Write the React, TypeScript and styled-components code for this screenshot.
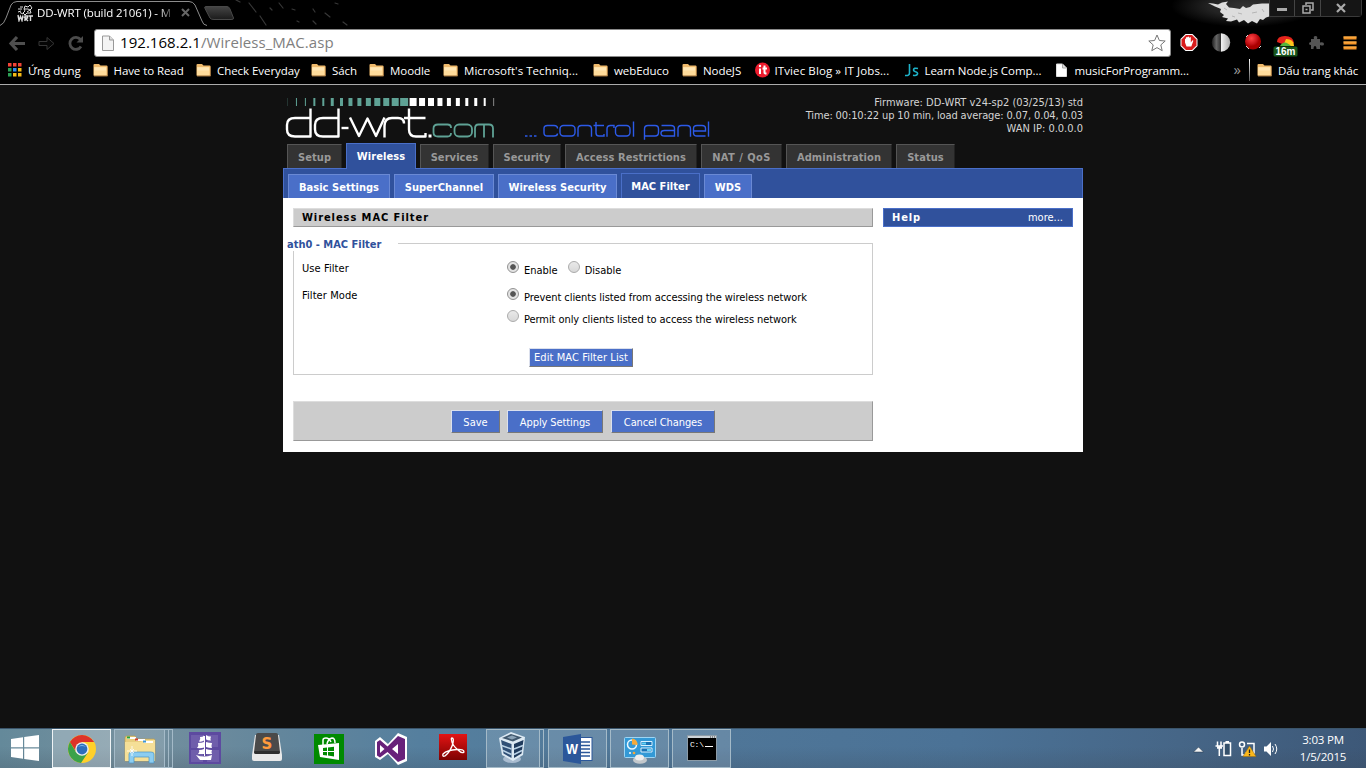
import React from 'react';
import styled, { createGlobalStyle, css } from 'styled-components';

const GlobalStyle = createGlobalStyle`
  * { box-sizing: border-box; }
  body { margin: 0; background: #111; overflow: hidden; }
`;

const uiFont = '"Open Sans", "Noto Sans", sans-serif';
const pageFont = '"DejaVu Sans Condensed", "DejaVu Sans", sans-serif';

const Screen = styled.div`
  width: 1366px;
  height: 768px;
  display: flex;
  flex-direction: column;
  background: #111;
  font-family: ${uiFont};
`;

/* ---------- browser frame ---------- */

const TabStrip = styled.div`
  height: 28px;
  display: flex;
  justify-content: space-between;
  background: #000;
  position: relative;
`;

const StripArt = styled.svg`
  position: absolute;
  left: 0;
  top: 0;
`;

const BrowserTab = styled.div`
  width: 210px;
  height: 28px;
  padding: 0 20px 3px 17px;
  display: flex;
  align-items: center;
  position: relative;
`;

const TabTitle = styled.span`
  width: 140px;
  margin-left: 4px;
  white-space: nowrap;
  color: #fff;
  font-size: 11.5px;
  letter-spacing: -0.13px;
  mask-image: linear-gradient(90deg, #000 122px, transparent 138px);
`;

const TabClose = styled.svg`
  margin-left: 4px;
`;

const WindowControls = styled.div`
  position: relative;
  display: flex;
  height: 17px;
  width: 93px;
  margin-right: 4px;
  border: 1px solid #3a3a3a;
  border-top: 0;
  border-radius: 0 0 4px 0;
`;

const ControlButton = styled.div<{ $w: number }>`
  width: ${p => p.$w}px;
  display: flex;
  align-items: center;
  justify-content: center;
  background: #151515;
  & + & { border-left: 1px solid #444; }
`;

const Toolbar = styled.div`
  height: 29px;
  display: flex;
  align-items: center;
  background: #000;
  padding-left: 8px;
`;

const NavIcons = styled.svg`
  flex: none;
  margin-right: 8px;
`;

const AddressBar = styled.div`
  width: 1077px;
  height: 28px;
  display: flex;
  align-items: center;
  padding: 0 4px 0 5px;
  background: #fff;
  border: 1px solid #8a8a8a;
  border-radius: 3px;
`;

const Url = styled.span`
  flex: 1;
  margin-left: 4px;
  color: #808080;
  font-size: 15px;
  letter-spacing: 0.05px;
  line-height: 24px;
  padding-bottom: 2px;
`;

const Host = styled.span`
  color: #000;
`;

const Extensions = styled.svg`
  margin-left: 4px;
`;

const BookmarkBar = styled.div`
  height: 28px;
  display: flex;
  align-items: flex-start;
  padding-left: 7px;
  background: #000;
  border-bottom: 1px solid #aaa;
`;

const Bookmark = styled.div<{ $w: number; $ls?: number }>`
  width: ${p => p.$w}px;
  height: 26px;
  flex: none;
  display: flex;
  align-items: center;
  gap: 5px;
  color: #fff;
  font-size: 11.5px;
  letter-spacing: ${p => p.$ls ?? -0.05}px;
  white-space: nowrap;
`;

const Overflow = styled.span`
  width: 16px;
  line-height: 24px;
  color: #999;
  font-size: 15px;
`;

const BarDivider = styled.span`
  width: 1px;
  height: 22px;
  margin: 2px 7px 0 0;
  background: linear-gradient(#fff, #555);
`;

/* ---------- router page ---------- */

const Viewport = styled.main`
  flex: 1;
  font-family: ${pageFont};
  font-size: 11px;
  background: #111;
`;

const Panel = styled.div`
  width: 800px;
  margin-left: 283px;
`;

const Masthead = styled.header`
  height: 58px;
  display: flex;
  justify-content: space-between;
`;

const Status = styled.div`
  padding-top: 11px;
  line-height: 13px;
  text-align: right;
  color: #d4d4d4;
`;

const StatusLine = styled.div<{ $ls?: number }>`
  letter-spacing: ${p => p.$ls ?? 0}px;
`;

const MainTabs = styled.nav`
  height: 25px;
  display: flex;
  align-items: flex-end;
  gap: 4px;
  padding-left: 4px;
`;

const MainTab = styled.a<{ $w: number; $active?: boolean }>`
  width: ${p => p.$w}px;
  height: 24px;
  line-height: 25px;
  text-align: center;
  font-weight: bold;
  letter-spacing: ${p => (p.$w === 81 ? 0.45 : 0.08)}px;
  white-space: nowrap;
  color: #999;
  background: #333;
  border: solid;
  border-width: 1px 1px 0;
  border-color: #555 #222 #555 #555;
  ${p => p.$active && css`
    height: 26px;
    line-height: 25px;
    margin-bottom: -1px;
    position: relative;
    color: #fff;
    background: #30519c;
    border-color: #4a6fc8;
  `}
`;

const SubMenu = styled.nav`
  height: 30px;
  display: flex;
  align-items: flex-end;
  gap: 4px;
  padding-left: 4px;
  background: #30519c;
  border: solid #4a6fc8;
  border-width: 1px 1px 0;
`;

const SubTab = styled.a<{ $w: number; $active?: boolean }>`
  width: ${p => p.$w}px;
  height: ${p => (p.$active ? 25 : 24)}px;
  line-height: 25px;
  text-align: center;
  font-weight: bold;
  letter-spacing: 0.04px;
  white-space: nowrap;
  color: #fff;
  background: ${p => (p.$active ? '#30519c' : '#4a6fc8')};
  border: solid ${p => (p.$active ? '#4a6fc8' : '#6a89d4')};
  border-width: 1px 1px 0;
`;

const Content = styled.div`
  height: 254px;
  display: flex;
  gap: 10px;
  padding: 10px;
  background: #fff;
`;

const Main = styled.section`
  width: 580px;
`;

const Title = styled.h2`
  height: 19px;
  margin: 0;
  padding-left: 8px;
  font-size: 11px;
  line-height: 18px;
  letter-spacing: 0.93px;
  color: #000;
  background: #ccc;
  border: 1px solid;
  border-color: #ddd #999 #999 #ddd;
`;

const Fieldset = styled.div`
  height: 132px;
  margin-top: 16px;
  padding-left: 8px;
  border: 1px solid #ccc;
`;

const Legend = styled.div`
  width: 111px;
  height: 14px;
  margin: -7px 0 7px -15px;
  line-height: 15px;
  font-weight: bold;
  color: #30519c;
  background: #fff;
`;

const Setting = styled.div<{ $h: number }>`
  height: ${p => p.$h}px;
  display: flex;
`;

const SettingLabel = styled.div`
  width: 205px;
  padding-top: 4px;
  line-height: 14px;
  letter-spacing: 0.08px;
`;

const Choices = styled.div`
  display: flex;
  flex-wrap: wrap;
  align-content: flex-start;
  column-gap: 10px;
  row-gap: 6px;
  flex: 1;
  padding-top: 3px;
`;

const Choice = styled.label<{ $full?: boolean; $ls?: number }>`
  height: 16px;
  display: flex;
  gap: 5px;
  width: ${p => (p.$full ? '100%' : 'auto')};
  letter-spacing: ${p => p.$ls ?? 0}px;
  line-height: 20px;
  white-space: nowrap;
`;

const RadioDot = styled.span<{ $on?: boolean }>`
  width: 12px;
  height: 12px;
  border: 1px solid ${p => (p.$on ? '#929292' : '#ababab')};
  border-radius: 50%;
  background: ${p => (p.$on ? 'radial-gradient(circle, #555 0 2.4px, #e3e3e3 3.2px)' : 'linear-gradient(#e9e9e9, #d8d8d8)')};
`;

const Button = styled.button<{ $w: number; $h: number; $ls?: number }>`
  width: ${p => p.$w}px;
  height: ${p => p.$h}px;
  padding: ${p => (p.$h > 20 ? 1 : 0)}px 0 0;
  font: 11px ${pageFont};
  letter-spacing: ${p => p.$ls ?? 0}px;
  white-space: nowrap;
  color: #fff;
  background: #4a6fc8;
  border: 1px solid;
  border-color: #dbe0ed #777 #777 #dbe0ed;
`;

const EditRow = styled.div`
  padding: 17px 0 0 227px;
`;

const Footer = styled.div`
  height: 40px;
  margin-top: 26px;
  padding: 8px 0 0 157px;
  display: flex;
  gap: 7px;
  background: #ccc;
  border: 1px solid;
  border-color: #ddd #999 #999 #ddd;
  ${Button}:last-child { margin-left: 1px; }
`;

const Help = styled.aside`
  width: 190px;
  height: 19px;
  display: flex;
  justify-content: space-between;
  padding: 0 9px 0 8px;
  line-height: 18px;
  color: #fff;
  background: #30519c;
  border: 1px solid #4a6fc8;
`;

const HelpTitle = styled.b`
  letter-spacing: 0.9px;
`;

/* ---------- taskbar ---------- */

const Taskbar = styled.footer`
  height: 40px;
  display: flex;
  background:
    linear-gradient(#0000 45%, #39435038),
    linear-gradient(90deg, #64899a 0, #75909e 130px, #63869c 280px, #557f9e 420px, #4f7698 720px, #4b7296 960px, #466687 1180px, #3d5878 1366px);
  border-top: 1px solid #3b556b;
`;

const TaskSlot = styled.div<{ $w: number; $ml?: number; $open?: boolean; $focus?: boolean; $lift?: number }>`
  width: ${p => p.$w}px;
  height: 39px;
  margin-left: ${p => p.$ml ?? 0}px;
  padding-bottom: ${p => p.$lift ?? 0}px;
  flex: none;
  display: flex;
  align-items: center;
  justify-content: center;
  ${p => p.$open && css`
    background: #ffffff22;
    border: 1px solid #a4bac8;
  `}
  ${p => p.$focus && css`
    background: #ffffff40;
    border: 1px solid #eef3f5;
  `}
`;

const StackEdge = styled.div`
  width: 4px;
  height: 39px;
  border: solid #a4bac8;
  border-width: 1px 1px 1px 0;
`;

const Tray = styled.div`
  flex: 1;
  display: flex;
  align-items: center;
  justify-content: flex-end;
`;

const Clock = styled.div`
  width: 86px;
  text-align: center;
  color: #fff;
  font-size: 11.5px;
  line-height: 17px;
  letter-spacing: -0.2px;
  padding-bottom: 1px;
`;

/* ---------- drawings ---------- */

const specks = [[249, 3, 256, 12], [260, 16, 266, 25], [279, 3, 283, 8], [292, 9, 295, 10], [313, 9, 315, 12], [325, 13, 330, 17], [313, 21, 316, 24], [343, 22, 347, 25], [270, 8, 272, 10], [335, 3, 338, 4], [236, 0, 240, 2], [297, 21, 299, 22]];

const FrameArt = () => (
  <StripArt width="1366" height="28">
    <g stroke="#555" strokeWidth="1.2" strokeLinecap="round" opacity=".65">
      {specks.map(([a, b, c, d]) => <line key={a + b} x1={a} y1={b} x2={c} y2={d} />)}
    </g>
    <defs>
      <radialGradient id="haze"><stop offset="0" stopColor="#333" /><stop offset=".5" stopColor="#222" /><stop offset="1" stopColor="#000" /></radialGradient>
      <linearGradient id="newTab" x2="0" y2="1"><stop stopColor="#454545" /><stop offset="1" stopColor="#1b1b1b" /></linearGradient>
    </defs>
    <ellipse cx="1245" cy="6" rx="74" ry="21" fill="url(#haze)" />
    <path d="M1208 3L1213 3.500 1218 4.500 1222 2.500 1228 1.500 1226 4 1229 7.500 1234 8 1240 9 1243 6 1246 8 1250 7 1253 4.500 1262 3.500 1271 3.500V16L1266 17.500 1263 20 1260 19 1257 23.500 1252 21 1248 23.500 1244 20 1239 22.500 1237 19.500 1231 21.500 1226 21 1228 18.500 1222 17 1224 15 1220 12 1221 9 1215 6.500Z" fill="#ddd" />
    <path d="M1224 8l3 2M1238 13l4 1M1252 13l5-1M1232 16l3 1M1262 9l2 3" stroke="#b5b5b5" fill="none" />
    <path d="M1271 4l5 4 4-5M1272 9l3-1" stroke="#fff" fill="none" />
    <path d="M0 25.5Q4 24 6 18L11 5Q13 1.5 17 1.5H189Q193 1.5 195 5L202 21Q203 25 207 25.5" fill="#000" stroke="#8c8c8c" />
    <path d="M206 6.5H227Q229 6.5 230 9L233.500 18Q234 19.500 231 19.500H214Q211 19.500 210 18L205 8.500Q204 6.500 206 6.500Z" fill="url(#newTab)" stroke="#484848" />
  </StripArt>
);

const Favicon = () => (
  <svg width="16" height="18" viewBox="0 0 16 18">
    <g fill="none" stroke="#ddd" strokeWidth="1">
      <path d="M7 5l1-3 3 1 2-2 2 3-2 2 1 3-4 0-2 2-2-2 2-2-1-2h4l2 1-3 2" />
      <path d="M3 3h3M1 5h4M4 7L1 8M6 10L3 8.500" />
      <path d="M1 11l1 5.500 1.500-4 1.500 4 1-5M8 17v-5h2.500v2H8l3 3M11.500 12H16M13.500 12v5" strokeWidth="1.400" />
    </g>
  </svg>
);

const Folder = () => (
  <svg width="16" height="14" viewBox="0 0 16 14">
    <path d="M.5 2Q.5 1 1.500 1H6L7.500 2.500H13.500Q14.500 2.500 14.500 3.500V12Q14.500 13 13.500 13H1.500Q.5 13 .5 12Z" fill="#efba6c" />
    <path d="M1 4H13.500V12.500H1Z" fill="#ffdc9b" />
    <path d="M1.500 4.500h11.500v3H1.500z" fill="#ffe7b5" />
    <path d="M14.500 3.500v9.500H1" fill="none" stroke="#9c7340" />
  </svg>
);

const AppsGrid = () => (
  <svg width="16" height="16">
    {['#f44336', '#f44336', '#ef4436', '#2ca255', '#2d8cf0', '#f5b915', '#2ca255', '#f5b915', '#f5b915'].map((c, i) => (
      <rect key={i} x={1 + (i % 3) * 5} y={1 + Math.floor(i / 3) * 5} width="3.500" height="3.500" fill={c} />
    ))}
  </svg>
);

const PageIcon = ({ light }: { light?: boolean }) => (
  <svg width="16" height="18" viewBox="0 0 16 18">
    <path d={light ? 'M2.5 3H8.500L12.500 7V15.500H2.500Z' : 'M2.5 2H9.5L13.5 6V16.5H2.5Z'} fill={light ? '#fff' : '#f4f4f4'} stroke={light ? '#ddd' : '#999'} />
    <path d={light ? 'M8.5 3V7H12.5' : 'M9.5 2V6H13.5'} fill="#ddd" stroke={light ? '#aaa' : '#999'} />
  </svg>
);

const ItLogo = () => (
  <svg width="15" height="16">
    <circle cx="7.5" cy="8" r="7.5" fill="#ed1c2e" />
    <path d="M5 6.5V12M9.500 3.5V10.5Q9.5 11.5 11.5 11.5M7.5 6.5H12" stroke="#fff" strokeWidth="2" fill="none" />
    <circle cx="5" cy="4" r="1.2" fill="#fff" />
  </svg>
);

const JsLogo = () => (
  <svg width="16" height="16" fill="none" stroke="#1eb3c9" strokeWidth="1.6">
    <path d="M5.5 2V11Q5.5 14 1 13.5M14 6.500Q9.5 5.5 9.5 8 9.5 9 11.5 9.800 14 10.500 13.500 12 13 14 9 13.200" />
  </svg>
);

const ToolbarNav = () => (
  <NavIcons width="78" height="28">
    <path d="M9 8L3 14.5 9 21M4 14.5H17" fill="none" stroke="#4f4f4f" strokeWidth="3.2" />
    <path d="M31 12.5H39V8.5L46 14.5 39 20.5V16.5H31Z" fill="#050505" stroke="#363636" />
    <path d="M72.5 10.5A6 6 0 1 0 73 17.5" fill="none" stroke="#4c4c4c" strokeWidth="2.8" />
    <path d="M75 7V13.5H68.5Z" fill="#4c4c4c" />
  </NavIcons>
);

const ExtensionIcons = () => (
  <Extensions width="190" height="29">
    <defs>
      <linearGradient id="half" x2="1"><stop stopColor="#1c1c1c" /><stop offset=".25" stopColor="#666" /><stop offset=".48" stopColor="#333" /><stop offset=".5" stopColor="#f4f4f4" /><stop offset="1" stopColor="#aaa" /></linearGradient>
      <radialGradient id="redBall" cx=".4" cy=".3"><stop stopColor="#f44" /><stop offset=".7" stopColor="#c8151b" /><stop offset="1" stopColor="#a00" /></radialGradient>
    </defs>
    <path d="M10.5 6H17.500L22.5 11V18L17.500 23H10.5L5.5 18V11Z" fill="#fff" />
    <path d="M11 7H17L21.5 11.500V17.500L17 22H11L6.500 17.500V11.500Z" fill="#d81c1c" />
    <path d="M10 14.500V11q1-1 1 0V9.500q1-1 1.500 0V9q1-1 1.500 0v1l.5-.5q1-1 1.300 0v5l1.500-2q1-.5 1 .5l-2 5.500h-4.800Z" fill="#fff" />
    <circle cx="46" cy="14.500" r="9.200" fill="url(#half)" />
    <circle cx="78" cy="13.500" r="8" fill="url(#redBall)" />
    <path d="M71 9l2-2M84 20l2-2M71 18l3 3" stroke="#ddd" />
    <path d="M102 14Q102 8 110 8T119 15L110 17Z" fill="#e5241c" />
    <path d="M108 18L111 11Q119 11 119 18Z" fill="#ffc51c" />
    <path d="M105 18Q109 11 116 18Z" fill="#54b63c" />
    <rect x="98.500" y="18.500" width="24" height="10" rx="1.5" fill="#17561b" />
    <text x="110.500" y="27" textAnchor="middle" fontFamily="Liberation Sans" fontSize="10" fontWeight="bold" fill="#fff">16m</text>
    <path d="M136 11h3q-1-3 1.500-3t1.500 3h3v3.500q4-1 4 1.500t-4 1V21h-3.500q0-3-1.500-3t-1.500 3H136v-4q-2 0-2-1.500t2-1.500Z" fill="#555" />
    <path d="M168.500 10H181.500M168.500 15H181.500M168.500 20H181.500" stroke="#f4962a" strokeWidth="3.2" />
    <path d="M168.500 9H181.500M168.500 14H181.500M168.500 19H181.500" stroke="#ffb44f" />
  </Extensions>
);

const barWidths = [.5, 1, 1, 2, 2, 3, 3, 4, 4, 5, 6, 6, 7, 8, 7, 6, 6, 5, 4, 4, 3, 3, 2, 1];

const Logo = () => (
  <svg width="440" height="58">
    {barWidths.map((w, i) => (
      <rect key={i} x={4.5 + i * 8.95 - w / 2 + (i > 5 ? .3 : 0)} y="13" width={w} height="8" fill={i < 14 ? '#5fa295' : '#fff'} opacity={i === 0 || i === 23 ? .5 : 1} />
    ))}
    <g fill="none" strokeLinejoin="round">
      <g stroke="#fff" strokeWidth="2.4">
        <path d="M27.5 23.500V51.500H12Q4 51.500 4 44.500V40Q4 33 12 33H27.500" />
        <path d="M55.500 23.500V51.500H40Q32 51.500 32 44.500V40Q32 33 40 33H55.500" />
        <path d="M58.5 43H65.5" />
        <path d="M67 32.500L76 51 84.500 33.500 93 51 101.500 32.500" />
        <path d="M101.500 52.500V41Q101.500 33 109 33H115Q121 33 121 38.500" />
        <path d="M126 23.500V44.500Q126 51.500 133 51.500H142.500V48M121 33H142.500" />
      </g>
      <rect x="145.500" y="49.500" width="3" height="3" fill="#fff" />
      <g stroke="#5fa295" strokeWidth="1.8">
        <path d="M168 43V42.500Q168 39.500 164.500 39.500H155Q150.500 39.500 150.500 43.500V47.500Q150.500 51.500 155 51.500H164.500Q168 51.500 168 48" />
        <rect x="171.500" y="39.500" width="17.500" height="12" rx="4.500" />
        <path d="M192 52.500V43.500Q192 39.500 195.500 39.500H206Q210 39.500 210 43.500V52.500M201 39.500V52.500" />
      </g>
    </g>
    <g fill="none" stroke="#2c5ae8" strokeWidth="1.4">
      <path d="M242 51H244.500M246.500 51H249M251 51H253.500" />
      <path d="M274.5 43.500Q274.500 40.500 271 40.500H264.500Q261 40.500 261 43.500V48Q261 51 264.500 51H271Q274.500 51 274.500 48.500" />
      <rect x="277" y="40.500" width="15" height="10.500" rx="3.500" />
      <path d="M295 51.700V44Q295 40.500 298.500 40.500H305Q308.500 40.500 308.500 44V51.700" />
      <path d="M313 37V48Q313 51 316 51H321V49M310.500 40.500H321" />
      <path d="M324 51.700V44Q324 40.500 327.500 40.500H331V43" />
      <rect x="332.500" y="40.500" width="14.500" height="10.500" rx="3.500" />
      <path d="M350.5 36.500V51.700" />
      <path d="M361.500 54.700V44Q361.500 40.500 365 40.500H372Q375.500 40.500 375.500 44V47.500Q375.500 51 372 51H361.500" />
      <path d="M378.500 40.500H388Q391.500 40.500 391.500 43.500V51H381.500Q378 51 378 48.200 378 45.500 381.500 45.500H391.500" />
      <path d="M395 51.700V44Q395 40.500 398.500 40.500H404Q407.500 40.500 407.500 44V51.700" />
      <path d="M410.500 46H422.500V43.500Q422.500 40.500 419 40.500H414Q410.500 40.500 410.500 43.500V48Q410.500 51 414 51H422.500" />
      <path d="M425.500 36.500V51.700" />
    </g>
  </svg>
);

const StartIcon = () => (
  <svg width="28" height="26" fill="#fff">
    <path d="M0 4L12 2.2V12.2H0ZM13.200 2L28 0V12.2H13.2ZM0 13.4H12V23.8L0 22ZM13.200 13.4H28V26L13.2 24Z" />
  </svg>
);

const ChromeIcon = () => (
  <svg width="30" height="30" viewBox="-15 -15 30 30">
    <circle r="14" fill="#ffd02b" />
    <path d="M0-7H12.1A14 14 0 0 0-12.1-7L-5 4Z" fill="#dd3329" />
    <path d="M-12.1-7A14 14 0 0 0-1 14L6 3.5 0 0-6 3Z" fill="#3ba24a" />
    <circle r="6.8" fill="#eee" /><circle r="5.4" fill="#2d6ebd" />
    <path d="M-4-2Q0-6 4-2Q0-4-4-2Z" fill="#7dbcf0" />
  </svg>
);

const ExplorerIcon = () => (
  <svg width="34" height="30">
    <path d="M2 4Q2 2 4 2H12L14 5H31Q32 5 32 7V27H2Z" fill="#e9ce7e" stroke="#bd9a46" strokeWidth=".6" />
    <path d="M2 8H18L20 6H32V27H2Z" fill="#f5df97" />
    <path d="M4 3h9v2H4zM13 5h9v2h-9zM21 7h9v2h-9z" fill="#fff" />
    <path d="M4 2.500h3v2H4z" fill="#29a33a" /><path d="M12 4.500h3v2h-3z" fill="#d5402e" /><path d="M20 6.500h3v2h-3z" fill="#3c95d8" />
    <path d="M6 29V20Q6 18 9 18H28Q31 18 31 20V29H26V23H11V29Z" fill="#8ccdf1" stroke="#4894c4" strokeWidth=".7" />
    <path d="M9 12v10M4 17h10M7 15l4 4M11 15l-4 4" stroke="#fff" strokeWidth=".8" />
  </svg>
);

const ShipIcon = () => (
  <svg width="32" height="32">
    <rect width="32" height="32" fill="#5d4aa0" /><path d="M2 3h13v13H2zM18 3h11v12H18zM2 18h12v12H2zM18 18h12v12H18z" fill="#6f5eab" />
    <g fill="#fff"><path d="M11 5q3 0 4-1.500v5q-2 1.500-5 1 2-2 1-4.500zM17 3q3 2 5 1.500-1 2 0 4-3 0-5-1zM9 11q4 0 6-1v5.500q-3 1-7 .5 2-2 1-5zM17 10q3 1 6 1-1 3 0 5-3 0-6-1zM10 18q3 0 5-1v5h-6q2-2 1-4zM17 17q3 1 6 1-1 2 0 4h-6zM7 23q8 3 16 0l-1 5H11z" /><path d="M15.500 4v20" stroke="#fff" /></g>
  </svg>
);

const SublimeIcon = () => (
  <svg width="32" height="30">
    <path d="M1 22L4 2H28L31 22V26Q31 28 29 28H3Q1 28 1 26Z" fill="#e9e9e9" />
    <path d="M5 2Q5 0 7 0H25Q27 0 27 2L29 19Q29 21 27 21H5Q3 21 3 19Z" fill="#4a4a4a" />
    <path d="M4 18H28L29 19Q29 21 27 21H5Q3 21 3 19Z" fill="#2e2e2e" />
    <text x="16" y="15.500" textAnchor="middle" fill="#ff9a3c" fontFamily="DejaVu Sans" fontWeight="bold" fontSize="15">S</text>
  </svg>
);

const StoreIcon = () => (
  <svg width="30" height="30">
    <rect width="30" height="30" fill="#008a00" />
    <path d="M4 11L25 9V26L6 23Z" fill="#fff" /><path d="M9 11V6Q9 4 12 4T17 8M13 10Q14 5 18 4 21 4 21 9" fill="none" stroke="#fff" strokeWidth="1.5" />
    <path d="M9 14l4-.5V17H9zM14 13.400l6-.7V17h-6zM9 18h4v3.500L9 21zM14 18h6v4.400l-6-.8z" fill="#008a00" />
  </svg>
);

const VisualStudioIcon = () => (
  <svg width="34" height="32">
    <path d="M1 8L6 4 14 11 24 0 33 4V28L24 32 14 21 6 27 1 24Z" fill="#fff" />
    <path d="M3 9L6 7 13.5 13.5 24 3 31 6V26L24 29 13.5 19 6 24.5 3 22.5V9M6 12V20L10.5 16ZM24 11L18 16 24 21Z" fill="#68217a" fillRule="evenodd" />
  </svg>
);

const AcrobatIcon = () => (
  <svg width="28" height="26">
    <defs><linearGradient id="acro" x2="0" y2="1"><stop stopColor="#e31414" /><stop offset="1" stopColor="#7d0202" /></linearGradient></defs>
    <rect width="28" height="26" fill="url(#acro)" />
    <path d="M13 4Q15 4 14 9 12 17 6 22 3 23 4 20 8 16 18 15.5 25 15 25 18 23 20 19 16 13 11 12.5 6 12 4 13 4Z" fill="none" stroke="#fff" strokeWidth="1.3" />
  </svg>
);

const VirtualBoxIcon = () => (
  <svg width="32" height="32">
    <ellipse cx="15" cy="27" rx="9" ry="4" fill="#a9bcd0" />
    <path d="M2 6L14 0 28 5 26 23 16 29 5 23Z" fill="#dce9f3" />
    <path d="M5 6L14 2 25 5.500 16 9.500Z" fill="#40586e" /><path d="M10 5.500l5-2 5 2-5 2z" fill="#8ba3b7" />
    <path d="M4 8L14.500 12V26L6.500 21.500Z" fill="#2f4f76" /><path d="M26.500 8L17 12V26L24.500 21.500Z" fill="#1f3a5c" />
    <path d="M4.500 13.500L14.500 17M6 18.500l8.500 4M17 17l9-3.500M17 22.500l8-4" stroke="#b9d2e6" strokeWidth="1.6" />
  </svg>
);

const WordIcon = () => (
  <svg width="30" height="30">
    <rect x="14" y="3.5" width="15" height="23" fill="#fff" stroke="#2b579a" />
    <path d="M17 8H27M17 11.5H27M17 15H27M17 18.5H27M17 22H27" stroke="#2b579a" strokeWidth="1.4" />
    <path d="M0 3L18 0V30L0 27Z" fill="#2b579a" />
    <text x="9" y="20" textAnchor="middle" fill="#fff" fontFamily="Liberation Sans" fontWeight="bold" fontSize="14" textLength="12" lengthAdjust="spacingAndGlyphs">W</text>
  </svg>
);

const ControlPanelIcon = () => (
  <svg width="32" height="30">
    <rect x=".5" y="3.5" width="31" height="20" rx="1" fill="#3399d6" stroke="#9ed5f4" />
    <circle cx="8" cy="10.5" r="4.5" fill="none" stroke="#e9f7ff" strokeWidth="1.5" /><path d="M8 10.500V4.500A6 6 0 0 1 13.500 11Z" fill="#f5a93a" />
    <path d="M17 7.500h11v4H17zM17 14h11v4H17z" fill="#1973b5" stroke="#d8f1ff" /><path d="M18 9.500h4M23 16h4" stroke="#65d4f8" strokeWidth="2" />
    <circle cx="6" cy="19" r="1" fill="#fff" /><circle cx="10" cy="19" r="1.3" fill="#f5a93a" />
    <ellipse cx="16" cy="26" rx="7" ry="3.800" fill="#c3c8cc" /><ellipse cx="15.500" cy="23.500" rx="4.5" ry="3" fill="#eee" />
  </svg>
);

const TerminalIcon = () => (
  <svg width="30" height="26">
    <rect x=".5" y=".5" width="29" height="25" fill="#000" stroke="#8c9ba7" /><path d="M1 2H29" stroke="#ccd3d8" strokeWidth="2" /><path d="M23 2h1M25 2h1M27 2h1" stroke="#444" />
    <text x="3" y="12" fill="#fff" fontFamily="Liberation Mono" fontSize="8" textLength="14">C:\</text><path d="M18 11.500H26" stroke="#fff" />
  </svg>
);

const TrayIcons = () => (
  <svg width="96" height="24">
    <path d="M9.500 15L14.500 10 19.500 15Z" fill="#f4f4f4" stroke="#20364b" strokeWidth=".5" />
    <g fill="none" stroke="#fff" strokeWidth="1.5">
      <rect x="40" y="6" width="6.500" height="12.500" fill="#34506b" /><path d="M41.500 5H45" strokeWidth="2" /><path d="M33.500 4.500V9M37 4.500V9M31.500 9H39M35.300 9V19" /><path d="M33 10.500H38" strokeWidth="2.5" />
      <path d="M63 6.500H70V16H61M58 11V18H65" /><circle cx="58" cy="7.500" r="2.500" />
    </g>
    <path d="M65.500 9L72 19.500H59Z" fill="#fbb81b" stroke="#9c6b0a" strokeWidth=".5" /><path d="M65.500 12.500V16M65.500 17V18.500" stroke="#222" strokeWidth="1.3" />
    <path d="M80 9.500H82.500L87 5V19L82.500 14.500H80Z" fill="#fff" /><path d="M88.500 9Q90.500 12 88.500 15M91 7Q94.500 12 91 17" stroke="#fff" fill="none" />
  </svg>
);

/* ---------- data ---------- */

const folders: [string, number, number?][] = [
  ['Have to Read', 103.5, -0.08], ['Check Everyday', 115], ['Sách', 58], ['Moodle', 74],
  ["Microsoft's Techniq...", 150, 0.04], ['webEduco', 89], ['NodeJS', 72.5],
];

const mainTabs: [string, number][] = [
  ['Setup', 55], ['Wireless', 70], ['Services', 69], ['Security', 68], ['Access Restrictions', 132],
  ['NAT / QoS', 81], ['Administration', 106], ['Status', 59],
];

const subTabs: [string, number][] = [
  ['Basic Settings', 102], ['SuperChannel', 100], ['Wireless Security', 119], ['MAC Filter', 79], ['WDS', 48],
];

export default function App() {
  return (
    <Screen>
      <GlobalStyle />
      <TabStrip>
        <FrameArt />
        <BrowserTab>
          <Favicon />
          <TabTitle>DD-WRT (build 21061) - M</TabTitle>
          <TabClose width="9" height="9" stroke="#666" strokeWidth="2"><path d="M1 1L8 8M8 1L1 8" /></TabClose>
        </BrowserTab>
        <WindowControls>
          <ControlButton $w={24}><svg width="12" height="12"><rect x="1" y="6" width="10" height="3" fill="#aaa" /></svg></ControlButton>
          <ControlButton $w={26}>
            <svg width="12" height="12" fill="none" stroke="#aaa" strokeWidth="1.5"><path d="M4 3V1H11V8H9" /><rect x="1" y="4" width="7" height="7" /><path d="M3.500 7.500H5.500" /></svg>
          </ControlButton>
          <ControlButton $w={41}><svg width="10" height="10" stroke="#aaa" strokeWidth="2.2"><path d="M1 1L9 9M9 1L1 9" /></svg></ControlButton>
        </WindowControls>
      </TabStrip>

      <Toolbar>
        <ToolbarNav />
        <AddressBar>
          <PageIcon />
          <Url><Host>192.168.2.1</Host>/Wireless_MAC.asp</Url>
          <svg width="18" height="18" viewBox="0 0 18 18"><path d="M9 1L11.4 6.5 17.200 7 12.800 10.9 14.2 16.7 9 13.6 3.8 16.7 5.2 10.9 .8 7 6.6 6.5Z" fill="#fff" stroke="#777" /></svg>
        </AddressBar>
        <ExtensionIcons />
      </Toolbar>

      <BookmarkBar>
        <Bookmark $w={85.5} $ls={0.03}><AppsGrid />Ứng dụng</Bookmark>
        {folders.map(([name, w, ls]) => <Bookmark key={name} $w={w} $ls={ls}><Folder />{name}</Bookmark>)}
        <Bookmark $w={149} $ls={0.1}><ItLogo />ITviec Blog » IT Jobs...</Bookmark>
        <Bookmark $w={150}><JsLogo />Learn Node.js Comp...</Bookmark>
        <Bookmark $w={180}><PageIcon light />musicForProgramm...</Bookmark>
        <Overflow>»</Overflow>
        <BarDivider />
        <Bookmark $w={109} $ls={-0.08}><Folder />Dấu trang khác</Bookmark>
      </BookmarkBar>

      <Viewport>
        <Panel>
          <Masthead>
            <Logo />
            <Status>
              <StatusLine>Firmware: DD-WRT v24-sp2 (03/25/13) std</StatusLine>
              <StatusLine $ls={-0.13}>Time: 00:10:22 up 10 min, load average: 0.07, 0.04, 0.03</StatusLine>
              <StatusLine>WAN IP: 0.0.0.0</StatusLine>
            </Status>
          </Masthead>
          <MainTabs>
            {mainTabs.map(([name, w]) => <MainTab key={name} $w={w} $active={name === 'Wireless'}>{name}</MainTab>)}
          </MainTabs>
          <SubMenu>
            {subTabs.map(([name, w]) => <SubTab key={name} $w={w} $active={name === 'MAC Filter'}>{name}</SubTab>)}
          </SubMenu>
          <Content>
            <Main>
              <Title>Wireless MAC Filter</Title>
              <Fieldset>
                <Legend>ath0 - MAC Filter</Legend>
                <Setting $h={27}>
                  <SettingLabel>Use Filter</SettingLabel>
                  <Choices>
                    <Choice><RadioDot $on />Enable</Choice>
                    <Choice><RadioDot />Disable</Choice>
                  </Choices>
                </Setting>
                <Setting $h={46}>
                  <SettingLabel>Filter Mode</SettingLabel>
                  <Choices>
                    <Choice $full $ls={-0.07}><RadioDot $on />Prevent clients listed from accessing the wireless network</Choice>
                    <Choice $full $ls={-0.07}><RadioDot />Permit only clients listed to access the wireless network</Choice>
                  </Choices>
                </Setting>
                <EditRow><Button $w={104} $h={19} $ls={0.08}>Edit MAC Filter List</Button></EditRow>
              </Fieldset>
              <Footer>
                <Button $w={49} $h={23}>Save</Button>
                <Button $w={96} $h={23} $ls={-0.1}>Apply Settings</Button>
                <Button $w={104} $h={23} $ls={-0.1}>Cancel Changes</Button>
              </Footer>
            </Main>
            <Help><HelpTitle>Help</HelpTitle><span>more...</span></Help>
          </Content>
        </Panel>
      </Viewport>

      <Taskbar>
        <TaskSlot $w={50} $lift={1}><StartIcon /></TaskSlot>
        <TaskSlot $w={59} $ml={2} $focus><ChromeIcon /></TaskSlot>
        <TaskSlot $w={51} $ml={3} $open><ExplorerIcon /></TaskSlot>
        <StackEdge /><StackEdge />
        <TaskSlot $w={60} $ml={2} $lift={1}><ShipIcon /></TaskSlot>
        <TaskSlot $w={60} $ml={2} $lift={1}><SublimeIcon /></TaskSlot>
        <TaskSlot $w={60} $ml={2}><StoreIcon /></TaskSlot>
        <TaskSlot $w={60} $ml={2}><VisualStudioIcon /></TaskSlot>
        <TaskSlot $w={60} $ml={2} $lift={4}><AcrobatIcon /></TaskSlot>
        <TaskSlot $w={54} $ml={3} $open $lift={2}><VirtualBoxIcon /></TaskSlot>
        <StackEdge />
        <TaskSlot $w={59} $ml={4} $open><WordIcon /></TaskSlot>
        <TaskSlot $w={59} $ml={3} $open><ControlPanelIcon /></TaskSlot>
        <TaskSlot $w={59} $ml={3} $open $lift={2}><TerminalIcon /></TaskSlot>
        <Tray>
          <TrayIcons />
          <Clock>3:03 PM<br />1/5/2015</Clock>
        </Tray>
      </Taskbar>
    </Screen>
  );
}
